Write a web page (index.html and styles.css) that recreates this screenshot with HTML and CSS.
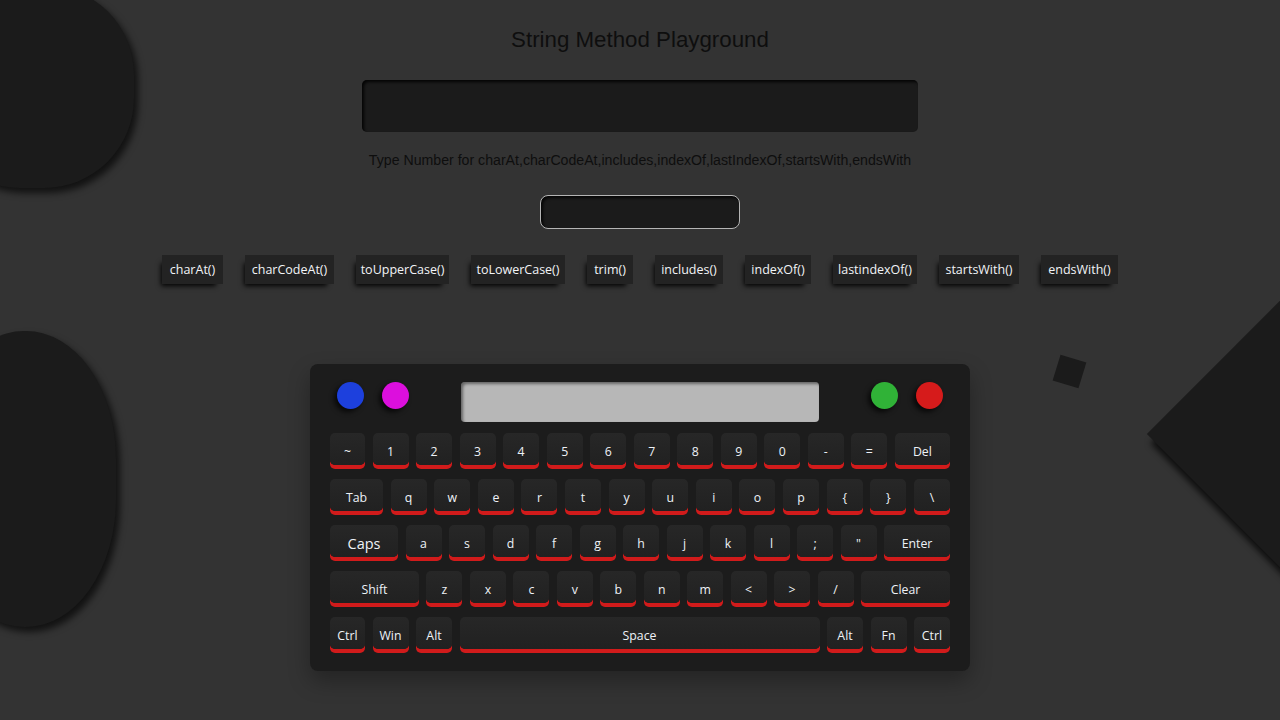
FILE: index.html
```html
<!DOCTYPE html>
<html lang="en">
<head>
<meta charset="utf-8">
<title>String Method Playground</title>
<link rel="stylesheet" href="styles.css">
</head>
<body>
  <div class="backdrop">
    <div class="deco blob-top"></div>
    <div class="deco blob-bottom"></div>
    <div class="deco square-small"></div>
    <div class="deco diamond"></div>
  </div>

  <main class="page">
    <h1 class="title">String Method Playground</h1>
    <div class="main-input"></div>
    <p class="hint">Type Number for charAt,charCodeAt,includes,indexOf,lastIndexOf,startsWith,endsWith</p>
    <div class="num-input"></div>

    <div class="methods">
      <button class="method w61">charAt()</button>
      <button class="method w89">charCodeAt()</button>
      <button class="method w93">toUpperCase()</button>
      <button class="method w94">toLowerCase()</button>
      <button class="method w46">trim()</button>
      <button class="method w68">includes()</button>
      <button class="method w66">indexOf()</button>
      <button class="method w84">lastindexOf()</button>
      <button class="method w80">startsWith()</button>
      <button class="method w77">endsWith()</button>
    </div>

    <section class="keyboard">
      <div class="kb-top">
        <div class="lights">
          <span class="light blue"></span>
          <span class="light magenta"></span>
        </div>
        <div class="screen"></div>
        <div class="lights">
          <span class="light green"></span>
          <span class="light red"></span>
        </div>
      </div>

      <div class="row">
        <span class="key k35">~</span>
        <span class="key">1</span>
        <span class="key">2</span>
        <span class="key">3</span>
        <span class="key">4</span>
        <span class="key">5</span>
        <span class="key">6</span>
        <span class="key">7</span>
        <span class="key">8</span>
        <span class="key">9</span>
        <span class="key">0</span>
        <span class="key">-</span>
        <span class="key">=</span>
        <span class="key del">Del</span>
      </div>

      <div class="row">
        <span class="key tab">Tab</span>
        <span class="key">q</span>
        <span class="key">w</span>
        <span class="key">e</span>
        <span class="key">r</span>
        <span class="key">t</span>
        <span class="key">y</span>
        <span class="key">u</span>
        <span class="key">i</span>
        <span class="key">o</span>
        <span class="key">p</span>
        <span class="key">{</span>
        <span class="key">}</span>
        <span class="key">\</span>
      </div>

      <div class="row">
        <span class="key caps">Caps</span>
        <span class="key">a</span>
        <span class="key">s</span>
        <span class="key">d</span>
        <span class="key">f</span>
        <span class="key">g</span>
        <span class="key">h</span>
        <span class="key">j</span>
        <span class="key">k</span>
        <span class="key">l</span>
        <span class="key">;</span>
        <span class="key">"</span>
        <span class="key enter">Enter</span>
      </div>

      <div class="row">
        <span class="key shift">Shift</span>
        <span class="key">z</span>
        <span class="key">x</span>
        <span class="key">c</span>
        <span class="key">v</span>
        <span class="key">b</span>
        <span class="key">n</span>
        <span class="key">m</span>
        <span class="key">&lt;</span>
        <span class="key">&gt;</span>
        <span class="key">/</span>
        <span class="key clear">Clear</span>
      </div>

      <div class="row">
        <span class="key k35">Ctrl</span>
        <span class="key">Win</span>
        <span class="key">Alt</span>
        <span class="key space">Space</span>
        <span class="key">Alt</span>
        <span class="key">Fn</span>
        <span class="key">Ctrl</span>
      </div>
    </section>
  </main>
</body>
</html>
```

FILE: styles.css
```css
* { box-sizing: border-box; }

html, body {
  margin: 0;
  padding: 0;
  width: 1280px;
  height: 720px;
  overflow: hidden;
}

body {
  position: relative;
  background: #333333;
  font-family: "Liberation Sans", Arial, sans-serif;
}

/* decorative background shapes (clipped to the viewport) */
.backdrop {
  position: absolute;
  inset: 0;
  overflow: hidden;
}

.deco {
  position: absolute;
  background: #1b1b1b;
}

.blob-top {
  left: -70px;
  top: -15px;
  width: 204px;
  height: 203px;
  border-radius: 90px;
  box-shadow: 4px 5px 7px rgba(0, 0, 0, 0.65);
}

.blob-bottom {
  left: -66px;
  top: 331px;
  width: 182px;
  height: 296px;
  border-radius: 90px / 128px;
  box-shadow: 4px 5px 7px rgba(0, 0, 0, 0.65);
}

.square-small {
  left: 1056px;
  top: 358px;
  width: 27px;
  height: 27px;
  transform: rotate(17deg);
}

.diamond {
  left: 1209px;
  top: 284px;
  width: 300px;
  height: 300px;
  transform: rotate(45deg);
  box-shadow: 9px 4px 6px rgba(0, 0, 0, 0.7);
}

/* page content */
.page {
  position: relative;
  display: flex;
  flex-direction: column;
  align-items: center;
  padding-top: 27px;
}

.title {
  margin: 0;
  font-size: 22.3px;
  line-height: 26px;
  font-weight: normal;
  color: #0e0e0e;
}

.main-input {
  margin-top: 27px;
  width: 556px;
  height: 52px;
  background: #1b1b1b;
  border-radius: 5px;
  box-shadow: inset 2px 2px 3px rgba(0, 0, 0, 0.85);
}

.hint {
  margin: 20px 0 0;
  font-size: 14.15px;
  line-height: 16px;
  color: #0e0e0e;
}

.num-input {
  margin-top: 27px;
  width: 200px;
  height: 34px;
  background: #1b1b1b;
  border: 1px solid #b5b5b5;
  border-radius: 8px;
  box-shadow: inset 2px 2px 3px rgba(0, 0, 0, 0.8);
}

.methods {
  margin-top: 26px;
  display: flex;
  gap: 22px;
  justify-content: center;
}

.method {
  height: 29px;
  padding: 0;
  border: none;
  background: #232323;
  color: #f2f4f7;
  font-family: "Open Sans", "Noto Sans", sans-serif;
  font-size: 12.5px;
  line-height: 29px;
  text-align: center;
  box-shadow: -4px 5px 5px -3px rgba(0, 0, 0, 0.95);
}

.w46 { width: 46px; }
.w61 { width: 61px; }
.w66 { width: 66px; }
.w68 { width: 68px; }
.w77 { width: 77px; }
.w80 { width: 80px; }
.w84 { width: 84px; }
.w89 { width: 89px; }
.w93 { width: 93px; }
.w94 { width: 94px; }

/* keyboard */
.keyboard {
  margin-top: 80px;
  width: 660px;
  height: 307px;
  padding: 18px 20px 0;
  background: #1c1c1c;
  border-radius: 8px;
  box-shadow: 0 10px 22px rgba(0, 0, 0, 0.3);
  display: flex;
  flex-direction: column;
  gap: 14px;
}

.kb-top {
  height: 40px;
  padding: 0 7px;
  display: flex;
  align-items: flex-start;
  justify-content: space-between;
  margin-bottom: -3px;
}

.lights {
  display: flex;
  gap: 18px;
}

.light {
  display: block;
  width: 27px;
  height: 27px;
  border-radius: 50%;
  box-shadow: -3px 3px 5px rgba(0, 0, 0, 0.7);
}

.blue { background: #1d40dd; }
.magenta { background: #dc0fdd; }
.green { background: #30b237; }
.red { background: #d61b1b; }

.screen {
  width: 358px;
  height: 40px;
  background: #b7b7b7;
  border-radius: 4px;
  box-shadow: inset 2px 2px 3px rgba(0, 0, 0, 0.45);
}

.row {
  display: flex;
  justify-content: space-between;
}

.key {
  width: 36px;
  height: 32px;
  display: flex;
  align-items: center;
  justify-content: center;
  padding-top: 4px;
  border-radius: 5px;
  background: linear-gradient(#272727, #212121);
  color: #eef2f7;
  font-family: "Open Sans", "Noto Sans", sans-serif;
  font-size: 12.3px;
  box-shadow: 0 4px 0 #d11b1b, 0 1px 0 rgba(0,0,0,0.4);
}

.k35 { width: 35px; }
.del { width: 55px; }
.tab { width: 53px; }
.caps { width: 68px; font-size: 14.5px; }
.enter { width: 66px; }
.shift { width: 89px; }
.clear { width: 89px; }
.space { width: 360px; }
```
